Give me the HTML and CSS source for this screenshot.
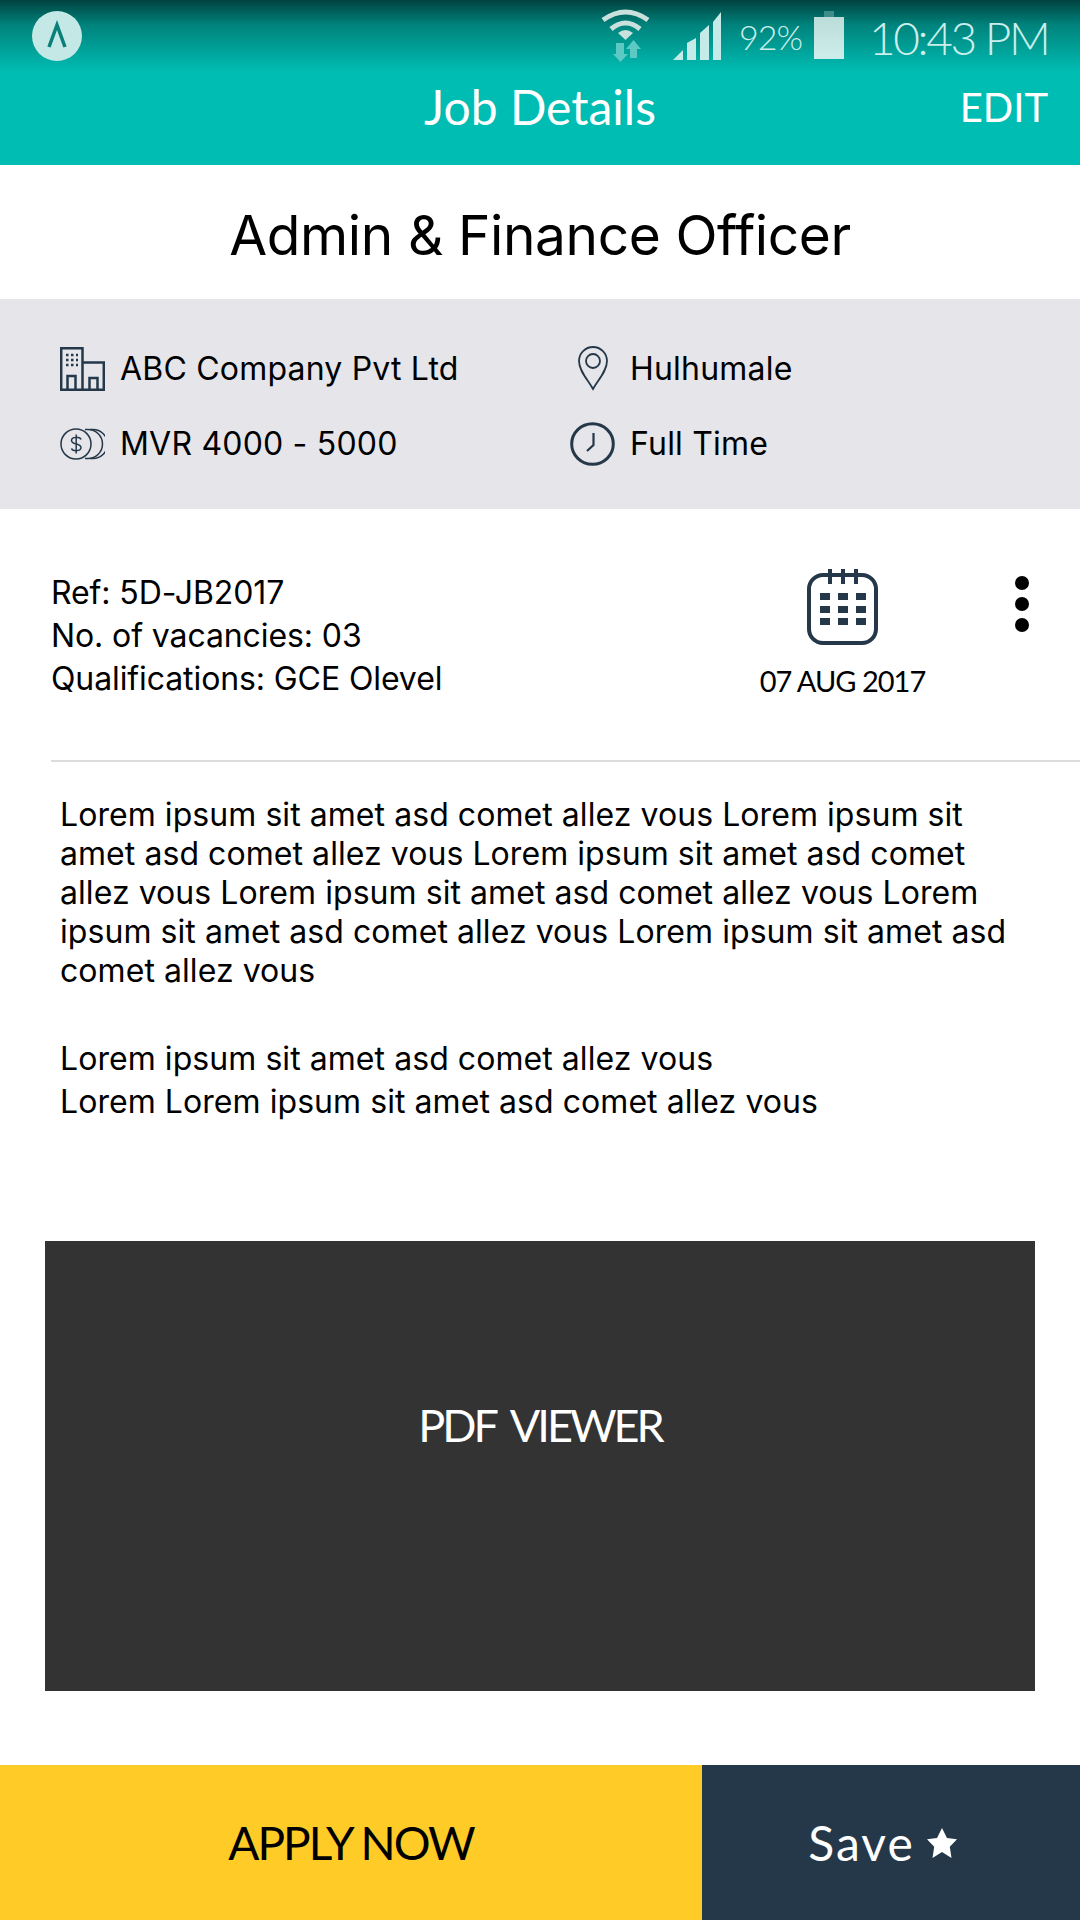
FILE: index.html
```html
<!DOCTYPE html>
<html lang="en">
<head>
    <meta charset="UTF-8">
    <meta name="viewport" content="width=device-width, initial-scale=1.0">
    <title>Job Details</title>
    <link rel="stylesheet" href="styles.css">
</head>
<body>
    <div class="page">
        <header class="app-header">
            <div class="status-bar">
                <span class="app-logo">
                    <svg width="50" height="50" viewBox="0 0 50 50"><circle cx="25" cy="25" r="25" fill="#c4e8e5"/><path d="M17 36 L25 14 L33 36" fill="none" stroke="#0a7f79" stroke-width="3.5"/></svg>
                </span>
                <div class="status-right">
                    <svg class="wifi" width="49" height="53" viewBox="0 0 49 53">
                        <g fill="none" stroke="#c9e0dd" stroke-width="5">
                            <path d="M2 11 Q24.5 -5 47 11"/>
                            <path d="M10 20 Q24.5 8 39 20"/>
                        </g>
                        <path d="M24.5 31 L17 24 Q24.5 18 32 24 Z" fill="#c9e0dd"/>
                        <path d="M15 34 H23 V45 H27 L19.5 53 L12 45 H15 Z" fill="#5cc9c2"/>
                        <path d="M32.5 31 L40 40 H36 V49 H29 V40 H25 Z" fill="#5cc9c2"/>
                    </svg>
                    <svg class="signal" width="48" height="48" viewBox="0 0 48 48" fill="#c5ebe8">
                        <path d="M0 48 L10 38 V48 Z"/>
                        <path d="M14 48 V31 L23 26 V48 Z"/>
                        <path d="M27 48 V21 L36 13 V48 Z"/>
                        <path d="M40 48 V10 L48 0 V48 Z"/>
                    </svg>
                    <span class="battery-pct">92%</span>
                    <span class="battery">
                        <span class="battery-tip"></span>
                        <span class="battery-body"></span>
                    </span>
                    <span class="clock-text">10:43 PM</span>
                </div>
            </div>
            <div class="title-bar">
                <h2 class="screen-title">Job Details</h2>
                <a class="edit-link">EDIT</a>
            </div>
        </header>

        <h1 class="job-title">Admin &amp; Finance Officer</h1>

        <section class="job-info">
            <div class="info-item">
                <span class="info-icon">
                    <svg width="45" height="44" viewBox="0 0 45 44" fill="none" stroke="#24384a" stroke-width="2.5">
                        <path d="M1.2 42.8 V1.2 H22.5 V42.8 Z"/>
                        <path d="M22.5 15.5 H43.8 V42.8 H22.5"/>
                        <path d="M7.5 42 V29 H15.5 V42"/>
                        <path d="M29.5 42 V31 H37.5 V42"/>
                        <path d="M6 8 H18 M6 13 H18 M6 18 H18" stroke-dasharray="2.5 2.5"/>
                    </svg>
                </span>
                <span>ABC Company Pvt Ltd</span>
            </div>
            <div class="info-item">
                <span class="info-icon">
                    <svg width="30" height="45" viewBox="0 0 30 45" fill="none" stroke="#24384a" stroke-width="1.8">
                        <path d="M15 43 C10 34 1 25 1 15 A14 14 0 0 1 29 15 C29 25 20 34 15 43 Z"/>
                        <circle cx="15" cy="15" r="7"/>
                    </svg>
                </span>
                <span>Hulhumale</span>
            </div>
            <div class="info-item">
                <span class="info-icon">
                    <svg width="45" height="32" viewBox="0 0 45 32" fill="none" stroke="#24384a" stroke-width="1.5">
                        <circle cx="16" cy="16" r="15"/>
                        <path d="M25 1.5 H28 A14.5 14.5 0 0 1 28 30.5 H25"/>
                        <path d="M30 1.5 H33 A14.5 14.5 0 0 1 33 30.5 H30"/>
                        <path d="M21 11.5 C20 8.5 11.5 8.5 11.5 12.5 C11.5 17 21 15 21 19.5 C21 23.5 12.5 23.5 11.5 20.5 M16.2 6.5 V25.5"/>
                    </svg>
                </span>
                <span>MVR 4000 - 5000</span>
            </div>
            <div class="info-item">
                <span class="info-icon">
                    <svg width="45" height="44" viewBox="0 0 45 44" fill="none" stroke="#24384a">
                        <ellipse cx="22.5" cy="22" rx="20.8" ry="20.3" stroke-width="3"/>
                        <path d="M23.5 11 V23 L17 29" stroke-width="2.2"/>
                    </svg>
                </span>
                <span>Full Time</span>
            </div>
        </section>

        <section class="job-meta">
            <div class="meta-text">
                <div>Ref: 5D-JB2017</div>
                <div>No. of vacancies: 03</div>
                <div>Qualifications: GCE Olevel</div>
            </div>
            <div class="meta-date">
                <svg width="72" height="76" viewBox="0 0 72 76">
                    <rect x="2" y="6" width="67" height="68" rx="14" fill="none" stroke="#24384a" stroke-width="4"/>
                    <path d="M23 0 V15 M36 0 V15 M49 0 V15" stroke="#24384a" stroke-width="4"/>
                    <g fill="#24384a">
                        <rect x="13" y="24" width="10" height="7"/><rect x="31" y="24" width="10" height="7"/><rect x="49" y="24" width="10" height="7"/>
                        <rect x="13" y="37" width="10" height="7"/><rect x="31" y="37" width="10" height="7"/><rect x="49" y="37" width="10" height="7"/>
                        <rect x="13" y="49" width="10" height="7"/><rect x="31" y="49" width="10" height="7"/><rect x="49" y="49" width="10" height="7"/>
                    </g>
                </svg>
                <span class="date-text">07 AUG 2017</span>
            </div>
            <div class="more-dots">
                <span></span><span></span><span></span>
            </div>
        </section>

        <div class="divider"></div>

        <section class="description">
            <p class="desc-main">Lorem ipsum sit amet asd comet allez vous Lorem ipsum sit<br>amet asd comet allez vous Lorem ipsum sit amet asd comet<br>allez vous Lorem ipsum sit amet asd comet allez vous Lorem<br>ipsum sit amet asd comet allez vous Lorem ipsum sit amet asd<br>comet allez vous</p>
            <p class="desc-extra">Lorem ipsum sit amet asd comet allez vous<br>Lorem Lorem ipsum sit amet asd comet allez vous</p>
        </section>

        <div class="pdf-viewer">PDF VIEWER</div>

        <footer class="actions">
            <button class="btn-apply">APPLY NOW</button>
            <button class="btn-save">Save
                <svg width="30" height="30" viewBox="0 0 30 30"><path d="M15 0 L20 10 L30 11.3 L22.8 18.8 L24.5 30 L15 24 L5.5 30 L7.2 18.8 L0 11.3 L10 10 Z" fill="#fff"/></svg>
            </button>
        </footer>
    </div>
</body>
</html>
```

FILE: styles.css
```css
* {
    box-sizing: border-box;
}
body {
    margin: 0;
    background-color: #fff;
    font-family: Inter, Arial, sans-serif;
    color: #000;
}
.page {
    width: 1080px;
    height: 1920px;
    display: flex;
    flex-direction: column;
    overflow: hidden;
}

/* header */
.app-header {
    height: 165px;
    background: linear-gradient(to bottom, #00423f 0, #00837c 25px, #00bdb3 72px);
    color: #fff;
    font-family: Lato, Arial, sans-serif;
}
.status-bar {
    height: 72px;
    padding: 11px 36px 0 32px;
    display: flex;
    justify-content: space-between;
    align-items: flex-start;
}
.app-logo {
    display: block;
    height: 50px;
}
.status-right {
    display: flex;
    align-items: flex-start;
    color: #cbeeeb;
}
.wifi {
    margin-top: -2px;
    margin-right: 23px;
}
.signal {
    margin-top: 1px;
    margin-right: 18px;
}
.battery-pct {
    width: 65px;
    margin-top: 5px;
    margin-right: 10px;
    font-size: 34px;
    font-weight: 300;
    letter-spacing: -1px;
    white-space: nowrap;
}
.battery {
    width: 30px;
    display: flex;
    flex-direction: column;
    align-items: center;
}
.battery-tip {
    width: 10px;
    height: 6px;
    background-color: #3f8d88;
}
.battery-body {
    width: 30px;
    height: 42px;
    background: linear-gradient(to bottom, #bcdcd9, #cdeeeb);
}
.clock-text {
    width: 175px;
    margin-left: 25px;
    margin-top: -1px;
    font-size: 46px;
    font-weight: 300;
    letter-spacing: -2.4px;
    white-space: nowrap;
}
.title-bar {
    position: relative;
    text-align: center;
}
.screen-title {
    margin: 0;
    font-size: 48px;
    font-weight: 400;
    line-height: 70px;
}
.edit-link {
    position: absolute;
    right: 32px;
    top: 0;
    font-size: 40px;
    line-height: 70px;
}

/* title + info band */
.job-title {
    margin: 0;
    height: 134px;
    line-height: 140px;
    text-align: center;
    font-size: 55px;
    font-weight: 400;
    letter-spacing: -0.4px;
}
.job-info {
    height: 210px;
    background-color: #e5e5ea;
    padding: 47px 0 0 60px;
    display: grid;
    grid-template-columns: 510px 1fr;
    grid-auto-rows: 75px;
    font-size: 32px;
    letter-spacing: 0.2px;
}
.info-item {
    display: flex;
    align-items: center;
    gap: 15px;
    height: 45px;
}
.info-icon {
    display: flex;
    justify-content: center;
    width: 45px;
}

/* ref, date */
.job-meta {
    height: 251px;
    padding: 62px 0 0 51px;
    display: flex;
}
.meta-text {
    width: 689px;
    font-size: 32px;
    line-height: 43px;
    letter-spacing: -0.1px;
}
.meta-date {
    width: 205px;
    display: flex;
    flex-direction: column;
    align-items: center;
    margin-top: -2px;
}
.date-text {
    margin-top: 18px;
    font-family: Lato, Arial, sans-serif;
    font-size: 29px;
    letter-spacing: -1px;
}
.more-dots {
    display: flex;
    flex-direction: column;
    gap: 7px;
    margin-left: 70px;
    margin-top: 5px;
}
.more-dots span {
    width: 14px;
    height: 14px;
    border-radius: 50%;
    background-color: #000;
}
.divider {
    height: 2px;
    margin-left: 51px;
    background-color: #dcdcdc;
}

/* description */
.description {
    height: 479px;
    padding: 33px 0 0 60px;
    font-size: 32px;
    letter-spacing: 0.06px;
}
.desc-main {
    margin: 0;
    line-height: 39px;
}
.desc-extra {
    margin: 47px 0 0;
    line-height: 43px;
}
.pdf-viewer {
    margin-left: 45px;
    width: 990px;
    height: 450px;
    padding-bottom: 82px;
    background-color: #333;
    color: #fff;
    font-family: Lato, Arial, sans-serif;
    font-size: 45px;
    letter-spacing: -3px;
    word-spacing: 8px;
    display: flex;
    align-items: center;
    justify-content: center;
}
.actions {
    margin-top: 74px;
    height: 155px;
    display: flex;
}
.actions button {
    border: none;
    font-family: Lato, Arial, sans-serif;
    display: flex;
    align-items: center;
    justify-content: center;
}
.btn-apply {
    width: 702px;
    background-color: #ffcb27;
    color: #000;
    font-size: 46px;
    letter-spacing: -2px;
}
.btn-save {
    flex: 1;
    gap: 12px;
    padding-right: 23px;
    background-color: #24384a;
    color: #fff;
    font-size: 48px;
    letter-spacing: 2px;
}
```
